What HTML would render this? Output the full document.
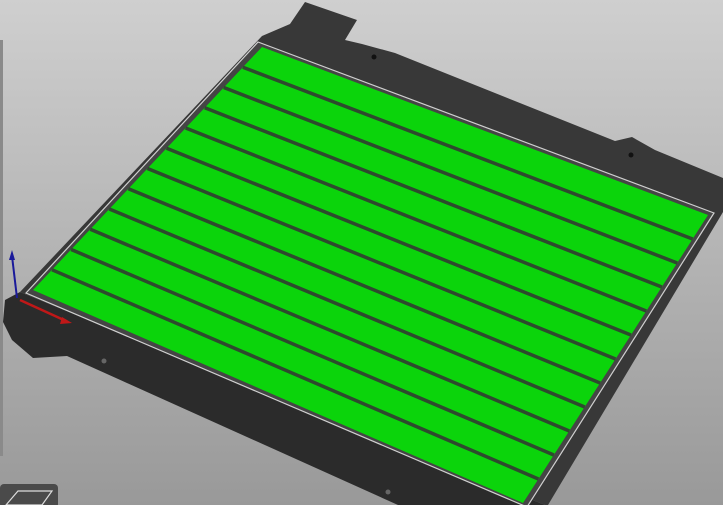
<!DOCTYPE html>
<html><head><style>
html,body{margin:0;padding:0;width:723px;height:505px;overflow:hidden;background:linear-gradient(#cfcfcf,#b4b4b4 50%,#999 100%);}
svg{position:absolute;left:0;top:0}
</style></head><body>
<svg width="723" height="505" viewBox="0 0 723 505">
<!-- plate side -->
<polygon points="5,300 20,292 545,505 398,505 67,356 33,358 12,340 3,322" fill="#2b2b2b"/>
<!-- plate top -->
<polygon points="20,292 262,36 290,24 305,2 357,20 345,40 362,44 395,53 615,141 632,137 655,150 723,178 723,212 548,505 545,505" fill="#383838"/>
<!-- sheet border -->
<polygon points="258,42 714,213 527,507 26,293" fill="#454545" stroke="#d0d0d0" stroke-width="1.2"/>
<!-- green -->
<polygon points="262,47 708,215 523,503 33,290" fill="#0bd40b"/>
<g stroke="#2e4a2e" stroke-width="3.5">
<line x1="242.9" y1="67.3" x2="692.6" y2="239"/>
<line x1="223.8" y1="87.5" x2="677.2" y2="263"/>
<line x1="204.8" y1="107.8" x2="661.8" y2="287"/>
<line x1="185.7" y1="128" x2="646.3" y2="311"/>
<line x1="166.6" y1="148.3" x2="630.9" y2="335"/>
<line x1="147.5" y1="168.5" x2="615.5" y2="359"/>
<line x1="128.4" y1="188.8" x2="600.1" y2="383"/>
<line x1="109.3" y1="209" x2="584.7" y2="407"/>
<line x1="90.3" y1="229.3" x2="569.3" y2="431"/>
<line x1="71.2" y1="249.5" x2="553.8" y2="455"/>
<line x1="52.1" y1="269.8" x2="538.4" y2="479"/>
</g>
<!-- holes -->
<circle cx="374" cy="57" r="2.5" fill="#111"/>
<circle cx="631" cy="155" r="2.5" fill="#111"/>
<circle cx="104" cy="361" r="2.5" fill="#666"/>
<circle cx="388" cy="492" r="2.5" fill="#666"/>
<!-- axes -->
<line x1="17" y1="298" x2="12" y2="256" stroke="#1a1a9a" stroke-width="2"/>
<polygon points="12,250 9,260 15,260" fill="#1a1a9a"/>
<line x1="20" y1="300" x2="66" y2="321" stroke="#c01818" stroke-width="2.5"/>
<polygon points="72,323 62,317 60,324" fill="#c01818"/>
<!-- left panel -->
<rect x="0" y="40" width="3" height="416" fill="#8a8a8a"/>
<rect x="0" y="484" width="58" height="24" rx="4" fill="#4a4a4a"/>
<polygon points="6,505 18,491 52,491 42,505" fill="none" stroke="#ddd" stroke-width="1.2"/>
</svg>
</body></html>
